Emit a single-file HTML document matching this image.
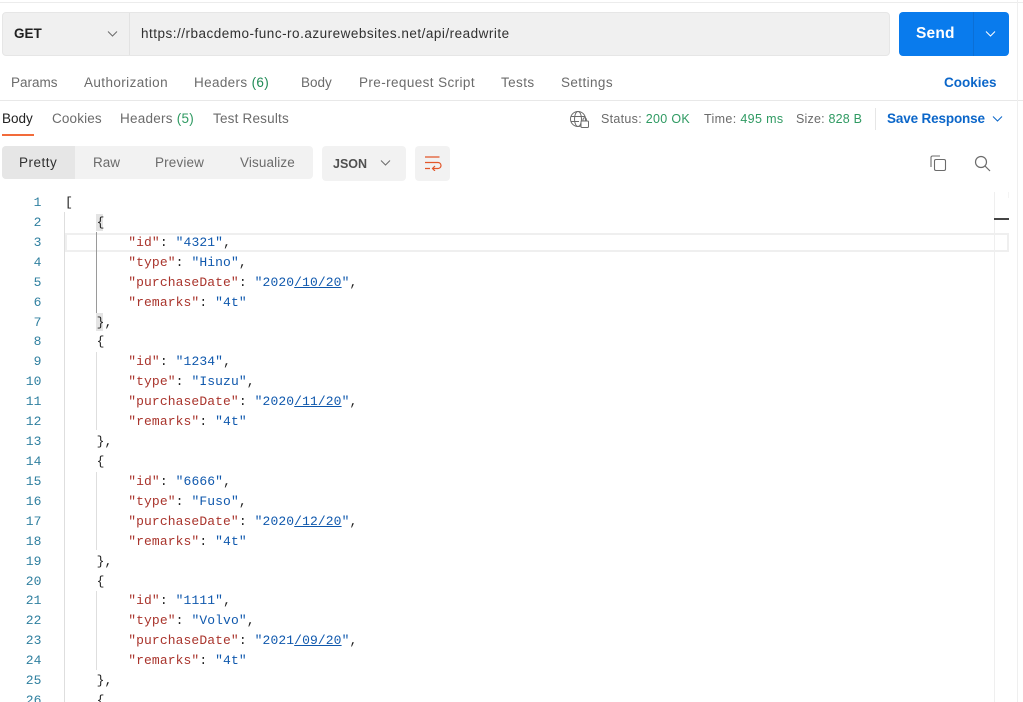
<!DOCTYPE html>
<html><head><meta charset="utf-8"><style>
html,body{margin:0;padding:0;background:#fff;width:1023px;height:702px;overflow:hidden}
body{position:relative;font-family:"Liberation Sans",sans-serif;font-size:13.5px;color:#6b6b6b;filter:blur(.3px)}
.a{position:absolute;white-space:pre}
.t{position:absolute;white-space:pre;line-height:18px}
.g{color:#1f8a55}.gs{color:#2f9a62}
.b{color:#0b66c9;font-weight:bold}
.code{position:absolute;left:65px;top:193px;margin:0;font:13px/19.92px "Liberation Mono",monospace;letter-spacing:.1px;color:#212121;white-space:pre}
.ln{position:absolute;left:0;top:193px;width:41.5px;margin:0;text-align:right;font:13px/19.92px "Liberation Mono",monospace;letter-spacing:.1px;color:#2f7f9f;white-space:pre}
.k{color:#a9342c}.s{color:#0f58ad}
</style></head><body>
<div class="a" style="left:0;top:2px;width:1023px;height:1px;background:#ececec"></div>
<div class="a" style="left:2px;top:12px;width:886px;height:42px;background:#f0f0f0;border:1px solid #e6e6e6;border-radius:4px"></div>
<div class="a" style="left:129px;top:13px;width:1px;height:42px;background:#e2e2e2"></div>
<div class="t" style="left:14px;top:25px;color:#212121;font-weight:bold;font-size:13.5px">GET</div>
<svg class="a" style="left:107px;top:30px" width="12" height="8" fill="none" stroke="#6b6b6b"><path d="M1 1.5l4.5 4.5 4.5-4.5"/></svg>
<div class="t" style="left:141px;top:25px;color:#303030;font-size:13.5px;letter-spacing:.5px">https://rbacdemo-func-ro.azurewebsites.net/api/readwrite</div>
<div class="a" style="left:899px;top:12px;width:110px;height:44px;background:#097bed;border-radius:4px"></div>
<div class="a" style="left:973px;top:12px;width:1px;height:44px;background:#0b6fd6"></div>
<div class="t" style="left:916px;top:25px;color:#fff;font-weight:bold;font-size:15.5px;letter-spacing:.2px">Send</div>
<svg class="a" style="left:985px;top:30px" width="12" height="8" fill="none" stroke="#fff"><path d="M1 1.5l4.5 4.5 4.5-4.5"/></svg>

<div class="t" style="left:11px;top:74px">Params</div>
<div class="t" style="left:84px;top:74px;letter-spacing:.4px">Authorization</div>
<div class="t" style="left:194px;top:74px;letter-spacing:.35px">Headers <span class="g">(6)</span></div>
<div class="t" style="left:301px;top:74px">Body</div>
<div class="t" style="left:359px;top:74px;letter-spacing:.4px">Pre-request Script</div>
<div class="t" style="left:501px;top:74px;letter-spacing:.4px">Tests</div>
<div class="t" style="left:561px;top:74px;letter-spacing:.4px">Settings</div>
<div class="t b" style="left:944px;top:74px">Cookies</div>
<div class="a" style="left:0;top:100px;width:1023px;height:1px;background:#e8e8e8"></div>

<div class="t" style="left:2px;top:110px;color:#212121">Body</div>
<div class="a" style="left:2px;top:134px;width:32px;height:2px;background:#f26b3a"></div>
<div class="t" style="left:52px;top:110px;letter-spacing:.15px">Cookies</div>
<div class="t" style="left:120px;top:110px;letter-spacing:.25px">Headers <span class="gs">(5)</span></div>
<div class="t" style="left:213px;top:110px;letter-spacing:.2px">Test Results</div>

<svg class="a" style="left:570px;top:110px" width="20" height="19" fill="none" stroke="#6b6b6b" stroke-width="1"><circle cx="8" cy="9" r="7.5"/><ellipse cx="8" cy="9" rx="3.5" ry="7.5"/><path d="M1 6.5h14M1 11.5h8"/><rect x="11" y="11" width="7.5" height="6.5" rx="1" fill="#fff"/><path d="M13 11V9.5a1.7 1.7 0 0 1 3.4 0V11"/></svg>
<div class="t" style="left:601px;top:110px;font-size:12.5px;letter-spacing:.3px">Status: <span class="gs">200 OK</span></div>
<div class="t" style="left:704px;top:110px;font-size:12.5px;letter-spacing:.35px">Time: <span class="gs">495 ms</span></div>
<div class="t" style="left:796px;top:110px;font-size:12.5px;letter-spacing:.2px">Size: <span class="gs">828 B</span></div>
<div class="a" style="left:875px;top:108px;width:1px;height:22px;background:#e6e6e6"></div>
<div class="t b" style="left:887px;top:110px;font-size:13.5px;letter-spacing:-.15px">Save Response</div>
<svg class="a" style="left:992px;top:115px" width="12" height="8" fill="none" stroke="#0b66c9"><path d="M1 1.5l4.5 4.5 4.5-4.5"/></svg>

<div class="a" style="left:2px;top:146px;width:311px;height:33px;background:#f2f2f2;border-radius:4px"></div>
<div class="a" style="left:2px;top:146px;width:73px;height:33px;background:#e6e6e6;border-radius:4px 0 0 4px"></div>
<div class="t" style="left:19px;top:154px;color:#303030;letter-spacing:.5px">Pretty</div>
<div class="t" style="left:93px;top:154px">Raw</div>
<div class="t" style="left:155px;top:154px;letter-spacing:.15px">Preview</div>
<div class="t" style="left:240px;top:154px;letter-spacing:.12px">Visualize</div>
<div class="a" style="left:322px;top:146px;width:84px;height:35px;background:#f2f2f2;border-radius:4px"></div>
<div class="t" style="left:333px;top:155px;font-weight:bold;font-size:12.5px;color:#505050">JSON</div>
<svg class="a" style="left:380px;top:159px" width="12" height="8" fill="none" stroke="#6b6b6b"><path d="M1 1.5l4.5 4.5 4.5-4.5"/></svg>
<div class="a" style="left:415px;top:146px;width:35px;height:35px;background:#f2f2f2;border-radius:4px"></div>
<svg class="a" style="left:424px;top:155px" width="18" height="16" fill="none" stroke="#e2562a" stroke-width="1.2"><path d="M1 2h14.5M1 7.5h13a2.6 2.6 0 0 1 0 6H9M11 11l-2.5 2.5L11 16M1 13.5h5"/></svg>
<svg class="a" style="left:930px;top:155px" width="17" height="17" fill="none" stroke="#6b6b6b" stroke-width="1.1"><path d="M1 12V2.5A1.5 1.5 0 0 1 2.5 1H10"/><rect x="4.5" y="4.5" width="11" height="11" rx="1.5"/></svg>
<svg class="a" style="left:974px;top:155px" width="17" height="17" fill="none" stroke="#6b6b6b" stroke-width="1.2"><circle cx="7" cy="7" r="5.5"/><path d="M11 11l5 5"/></svg>

<div class="a" style="left:65px;top:233px;width:940px;height:15px;border:2px solid #efefef"></div>
<div class="a" style="left:64px;top:212px;width:1px;height:490px;background:#dedede"></div>
<div class="a" style="left:96px;top:232px;width:1px;height:82px;background:#9a9a9a"></div>
<div class="a" style="left:96px;top:352px;width:1px;height:78px;background:#dedede"></div>
<div class="a" style="left:96px;top:472px;width:1px;height:78px;background:#dedede"></div>
<div class="a" style="left:96px;top:591px;width:1px;height:79px;background:#dedede"></div>
<div class="a" style="left:96px;top:214px;width:7px;height:17px;background:#e4e4e4"></div>
<div class="a" style="left:96px;top:313px;width:7px;height:18px;background:#e4e4e4"></div>
<div class="a" style="left:994px;top:192px;width:1px;height:510px;background:#efefef"></div>
<div class="a" style="left:1008px;top:192px;width:1px;height:6px;background:#f4f4f4"></div>
<div class="a" style="left:994px;top:218px;width:15px;height:2px;background:#444"></div>
<div class="a" style="left:1017px;top:0;width:1px;height:702px;background:#efefef"></div>

<pre class="ln">1
2
3
4
5
6
7
8
9
10
11
12
13
14
15
16
17
18
19
20
21
22
23
24
25
26</pre>
<pre class="code">[
    {
        <span class="k">"id"</span>: <span class="s">"4321"</span>,
        <span class="k">"type"</span>: <span class="s">"Hino"</span>,
        <span class="k">"purchaseDate"</span>: <span class="s">"2020<u>/10/20</u>"</span>,
        <span class="k">"remarks"</span>: <span class="s">"4t"</span>
    },
    {
        <span class="k">"id"</span>: <span class="s">"1234"</span>,
        <span class="k">"type"</span>: <span class="s">"Isuzu"</span>,
        <span class="k">"purchaseDate"</span>: <span class="s">"2020<u>/11/20</u>"</span>,
        <span class="k">"remarks"</span>: <span class="s">"4t"</span>
    },
    {
        <span class="k">"id"</span>: <span class="s">"6666"</span>,
        <span class="k">"type"</span>: <span class="s">"Fuso"</span>,
        <span class="k">"purchaseDate"</span>: <span class="s">"2020<u>/12/20</u>"</span>,
        <span class="k">"remarks"</span>: <span class="s">"4t"</span>
    },
    {
        <span class="k">"id"</span>: <span class="s">"1111"</span>,
        <span class="k">"type"</span>: <span class="s">"Volvo"</span>,
        <span class="k">"purchaseDate"</span>: <span class="s">"2021<u>/09/20</u>"</span>,
        <span class="k">"remarks"</span>: <span class="s">"4t"</span>
    },
    {</pre>
</body></html>
